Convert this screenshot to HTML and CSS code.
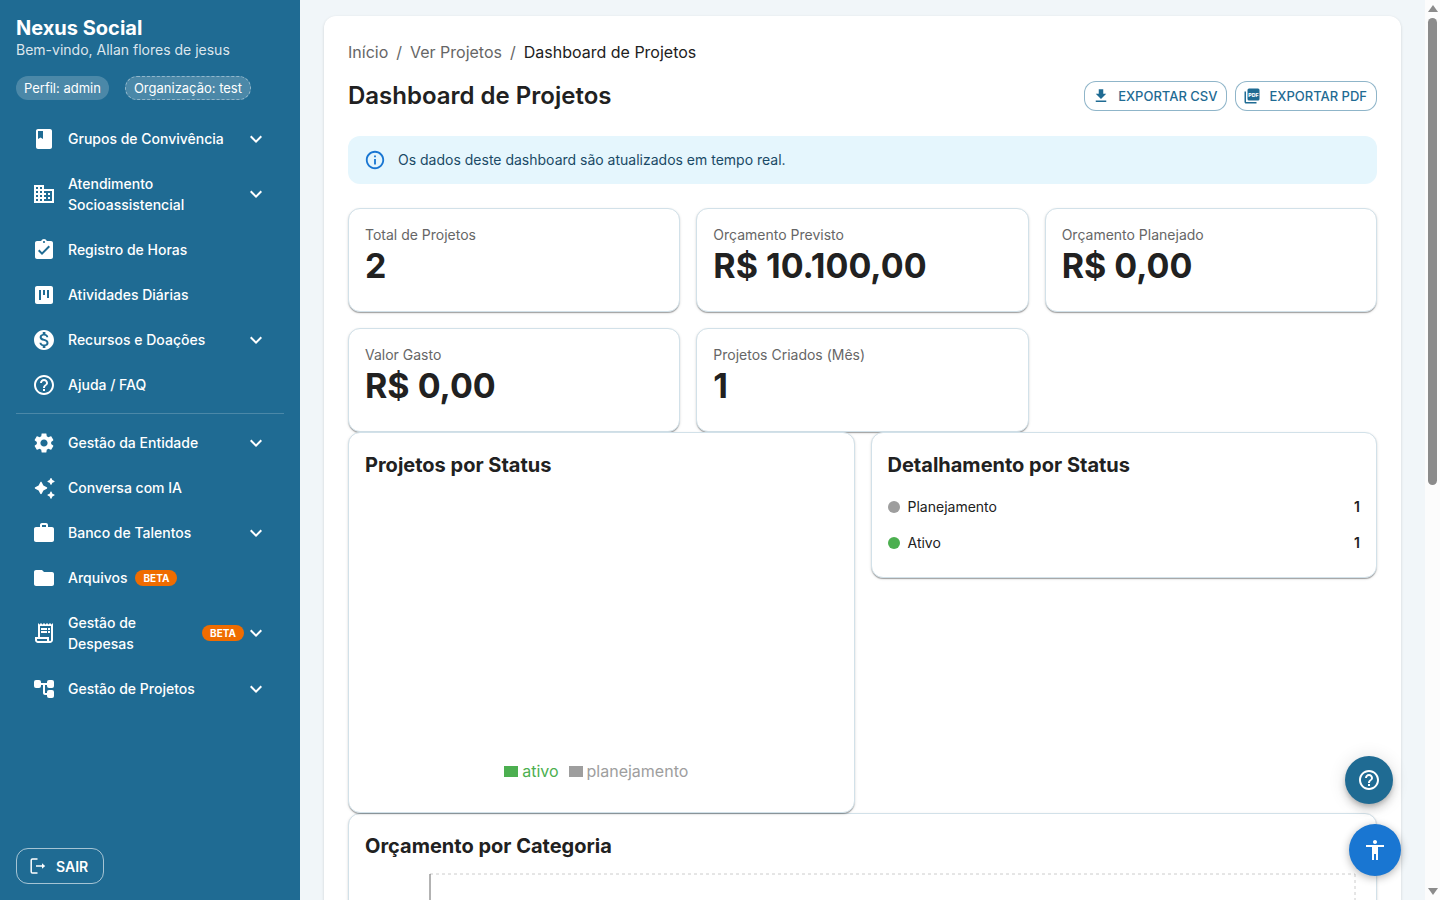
FILE: index.html
```html
<!DOCTYPE html>
<html lang="pt-BR">
  <head>
    <meta charset="UTF-8" />
    <meta name="viewport" content="width=device-width, initial-scale=1.0" />
    <title>Nexus Social - Dashboard de Projetos</title>
    <link rel="stylesheet" href="styles.css">
  </head>
  <body>
    <svg class="sprite" aria-hidden="true">
      <symbol id="i-chevron" viewBox="0 0 24 24"><path d="M16.59 8.59 12 13.17 7.41 8.59 6 10l6 6 6-6z"/></symbol>
      <symbol id="i-help" viewBox="0 0 24 24"><path d="M11 18h2v-2h-2v2zm1-16C6.48 2 2 6.48 2 12s4.48 10 10 10 10-4.48 10-10S17.52 2 12 2zm0 18c-4.41 0-8-3.59-8-8s3.59-8 8-8 8 3.59 8 8-3.59 8-8 8zm0-14c-2.21 0-4 1.79-4 4h2c0-1.1.9-2 2-2s2 .9 2 2c0 2-3 1.75-3 5h2c0-2.25 3-2.5 3-5 0-2.21-1.79-4-4-4z"/></symbol>
    </svg>

    <div class="app">
      <aside class="sidebar">
        <div class="brand">Nexus Social</div>
        <div class="welcome">Bem-vindo, Allan flores de jesus</div>
        <div class="chips">
          <span class="chip">Perfil: admin</span>
          <span class="chip chip-dashed">Organização: test</span>
        </div>

        <nav class="menu">
          <button type="button" class="menu-item">
            <svg class="icon" viewBox="0 0 24 24"><path d="M18 2H6c-1.1 0-2 .9-2 2v16c0 1.1.9 2 2 2h12c1.1 0 2-.9 2-2V4c0-1.1-.9-2-2-2zM6 4h5v8l-2.500-1.500L6 12V4z"/></svg>
            <span class="menu-label"><span>Grupos de Convivência</span></span>
            <svg class="icon"><use href="#i-chevron"/></svg>
          </button>
          <button type="button" class="menu-item">
            <svg class="icon" viewBox="0 0 24 24"><path d="M12 7V3H2v18h20V7H12zM6 19H4v-2h2v2zm0-4H4v-2h2v2zm0-4H4V9h2v2zm0-4H4V5h2v2zm4 12H8v-2h2v2zm0-4H8v-2h2v2zm0-4H8V9h2v2zm0-4H8V5h2v2zm10 12h-8v-2h2v-2h-2v-2h2v-2h-2V9h8v10zm-2-8h-2v2h2v-2zm0 4h-2v2h2v-2z"/></svg>
            <span class="menu-label"><span>Atendimento Socioassistencial</span></span>
            <svg class="icon"><use href="#i-chevron"/></svg>
          </button>
          <a href="#" class="menu-item">
            <svg class="icon" viewBox="0 0 24 24"><path d="M19 3h-4.180C14.400 1.840 13.300 1 12 1c-1.300 0-2.400.84-2.820 2H5c-1.100 0-2 .9-2 2v14c0 1.100.9 2 2 2h14c1.100 0 2-.9 2-2V5c0-1.100-.9-2-2-2zm-7 0c.55 0 1 .45 1 1s-.45 1-1 1-1-.45-1-1 .45-1 1-1zm-2 14l-4-4 1.410-1.410L10 14.170l6.590-6.590L18 9l-8 8z"/></svg>
            <span class="menu-label"><span>Registro de Horas</span></span>
          </a>
          <a href="#" class="menu-item">
            <svg class="icon" viewBox="0 0 24 24"><path d="M19 3H5c-1.100 0-2 .9-2 2v14c0 1.100.9 2 2 2h14c1.100 0 2-.9 2-2V5c0-1.100-.9-2-2-2zM9 17H7V7h2v10zm4-5h-2V7h2v5zm4 3h-2V7h2v8z"/></svg>
            <span class="menu-label"><span>Atividades Diárias</span></span>
          </a>
          <button type="button" class="menu-item">
            <svg class="icon" viewBox="0 0 24 24"><path d="M12 2C6.480 2 2 6.480 2 12s4.480 10 10 10 10-4.480 10-10S17.520 2 12 2zm1.410 16.090V20h-2.670v-1.930c-1.710-.36-3.160-1.460-3.270-3.400h1.960c.1 1.050.82 1.870 2.650 1.870 1.960 0 2.400-.98 2.400-1.590 0-.83-.44-1.610-2.670-2.140-2.480-.6-4.180-1.620-4.180-3.670 0-1.720 1.390-2.840 3.110-3.210V4h2.670v1.950c1.860.45 2.790 1.860 2.850 3.390H14.300c-.05-1.110-.64-1.870-2.220-1.870-1.500 0-2.400.68-2.400 1.640 0 .84.65 1.390 2.670 1.910s4.180 1.390 4.180 3.910c-.01 1.830-1.380 2.830-3.120 3.160z"/></svg>
            <span class="menu-label"><span>Recursos e Doações</span></span>
            <svg class="icon"><use href="#i-chevron"/></svg>
          </button>
          <a href="#" class="menu-item">
            <svg class="icon"><use href="#i-help"/></svg>
            <span class="menu-label"><span>Ajuda / FAQ</span></span>
          </a>

          <hr class="divider" />

          <button type="button" class="menu-item">
            <svg class="icon" viewBox="0 0 24 24"><path d="M19.140 12.940c.04-.3.06-.61.06-.94 0-.32-.02-.64-.07-.94l2.030-1.580c.18-.14.23-.41.12-.61l-1.920-3.320c-.12-.22-.37-.29-.59-.22l-2.390.96c-.5-.38-1.030-.7-1.620-.94l-.36-2.540c-.04-.24-.24-.41-.48-.41h-3.840c-.24 0-.43.17-.47.41l-.36 2.540c-.59.24-1.130.57-1.620.94l-2.390-.96c-.22-.08-.47 0-.59.22L2.740 8.870c-.12.21-.08.47.12.61l2.030 1.580c-.05.3-.09.63-.09.94s.02.64.07.94l-2.030 1.580c-.18.14-.23.41-.12.61l1.920 3.320c.12.22.37.29.59.22l2.390-.96c.5.38 1.030.7 1.620.94l.36 2.540c.05.24.24.41.48.41h3.840c.24 0 .44-.17.47-.41l.36-2.540c.59-.24 1.130-.56 1.620-.94l2.390.96c.22.08.47 0 .59-.22l1.920-3.320c.12-.22.07-.47-.12-.61l-2.010-1.580zM12 15.600c-1.980 0-3.600-1.620-3.600-3.600s1.620-3.600 3.600-3.600 3.600 1.620 3.600 3.600-1.620 3.600-3.600 3.600z"/></svg>
            <span class="menu-label"><span>Gestão da Entidade</span></span>
            <svg class="icon"><use href="#i-chevron"/></svg>
          </button>
          <a href="#" class="menu-item">
            <svg class="icon" viewBox="0 0 24 24"><path d="M8.300 6.200c.3-.6 1.100-.6 1.400 0l1.700 3.400 3.400 1.700c.6.3.6 1.100 0 1.400l-3.400 1.700-1.700 3.400c-.3.6-1.100.6-1.400 0l-1.700-3.400-3.400-1.700c-.6-.3-.6-1.100 0-1.400l3.400-1.700zM18.500 2.200c.2-.4.800-.4 1 0l.9 1.900 1.900.9c.4.2.4.800 0 1l-1.900.7-.9 1.900c-.2.4-.8.4-1 0l-.9-1.900-1.900-.7c-.4-.2-.4-.8 0-1l1.900-.9zM18.500 15.800c.2-.4.800-.4 1 0l.9 1.900 1.900.9c.4.2.4.800 0 1l-1.900.9-.9 1.900c-.2.4-.8.4-1 0l-.9-1.900-1.900-.9c-.4-.2-.4-.8 0-1l1.900-.9z"/></svg>
            <span class="menu-label"><span>Conversa com IA</span></span>
          </a>
          <button type="button" class="menu-item">
            <svg class="icon" viewBox="0 0 24 24"><path d="M20 6h-4V4c0-1.110-.89-2-2-2h-4c-1.110 0-2 .89-2 2v2H4c-1.110 0-1.990.89-1.990 2L2 19c0 1.110.89 2 2 2h16c1.110 0 2-.89 2-2V8c0-1.110-.89-2-2-2zm-6 0h-4V4h4v2z"/></svg>
            <span class="menu-label"><span>Banco de Talentos</span></span>
            <svg class="icon"><use href="#i-chevron"/></svg>
          </button>
          <a href="#" class="menu-item">
            <svg class="icon" viewBox="0 0 24 24"><path d="M10 4H4c-1.100 0-1.990.9-1.990 2L2 18c0 1.100.9 2 2 2h16c1.100 0 2-.9 2-2V8c0-1.100-.9-2-2-2h-8l-2-2z"/></svg>
            <span class="menu-label"><span>Arquivos</span><span class="beta">BETA</span></span>
          </a>
          <button type="button" class="menu-item">
            <svg class="icon" viewBox="0 0 24 24"><path d="M19.500 3.500 18 2l-1.500 1.500L15 2l-1.500 1.500L12 2l-1.500 1.500L9 2 7.500 3.500 6 2v14H3v3c0 1.660 1.340 3 3 3h12c1.660 0 3-1.340 3-3V2l-1.500 1.500zM15 20H6c-.55 0-1-.45-1-1v-1h10v2zm4-1c0 .55-.45 1-1 1s-1-.45-1-1v-3H8V5h11v14z"/><path d="M9 7h6v2H9zm7 0h2v2h-2zm-7 3h6v2H9zm7 0h2v2h-2z"/></svg>
            <span class="menu-label"><span>Gestão de Despesas</span><span class="beta">BETA</span></span>
            <svg class="icon"><use href="#i-chevron"/></svg>
          </button>
          <button type="button" class="menu-item">
            <svg class="icon" viewBox="0 0 24 24"><rect x="2" y="3" width="7" height="8" rx="2"/><rect x="15" y="3" width="7" height="8" rx="2"/><rect x="15" y="13" width="7" height="8" rx="2"/><path d="M8 6h8v2h-3v8h3v2h-3c-1.100 0-2-.9-2-2V8H8z"/></svg>
            <span class="menu-label"><span>Gestão de Projetos</span></span>
            <svg class="icon"><use href="#i-chevron"/></svg>
          </button>
        </nav>

        <button type="button" class="logout">
          <svg viewBox="0 0 18 18"><path d="M8.500 2H3.500c-.8 0-1.300.5-1.300 1.300v11.400c0 .8.500 1.300 1.300 1.300h5M7 9h7" fill="none" stroke="currentColor" stroke-width="1.500"/><path d="M13 6.200 16.200 9 13 11.800z"/></svg>
          SAIR
        </button>
      </aside>

      <main class="main">
        <div class="panel">
          <nav class="breadcrumb">
            <a href="#">Início</a>
            <span>/</span>
            <a href="#">Ver Projetos</a>
            <span>/</span>
            <span class="current">Dashboard de Projetos</span>
          </nav>

          <div class="page-header">
            <h1>Dashboard de Projetos</h1>
            <div class="actions">
              <button type="button" class="btn-export">
                <svg viewBox="0 0 24 24"><path d="M5 20h14v-2H5v2zM19 9h-4V3H9v6H5l7 7 7-7z"/></svg>
                EXPORTAR CSV
              </button>
              <button type="button" class="btn-export">
                <svg viewBox="0 0 24 24"><path d="M4 6H2v14c0 1.100.9 2 2 2h14v-2H4V6z"/><rect x="6" y="2" width="16" height="16" rx="2"/><text class="pdf-text" x="14" y="13" text-anchor="middle">PDF</text></svg>
                EXPORTAR PDF
              </button>
            </div>
          </div>

          <div class="alert">
            <svg viewBox="0 0 24 24"><path d="M11 7h2v2h-2zm0 4h2v6h-2zm1-9C6.480 2 2 6.480 2 12s4.480 10 10 10 10-4.480 10-10S17.520 2 12 2zm0 18c-4.410 0-8-3.590-8-8s3.590-8 8-8 8 3.590 8 8-3.590 8-8 8z"/></svg>
            <span>Os dados deste dashboard são atualizados em tempo real.</span>
          </div>

          <section class="stats">
            <div class="card">
              <div class="stat-label">Total de Projetos</div>
              <div class="stat-value">2</div>
            </div>
            <div class="card">
              <div class="stat-label">Orçamento Previsto</div>
              <div class="stat-value">R$ 10.100,00</div>
            </div>
            <div class="card">
              <div class="stat-label">Orçamento Planejado</div>
              <div class="stat-value">R$ 0,00</div>
            </div>
            <div class="card">
              <div class="stat-label">Valor Gasto</div>
              <div class="stat-value">R$ 0,00</div>
            </div>
            <div class="card">
              <div class="stat-label">Projetos Criados (Mês)</div>
              <div class="stat-value">1</div>
            </div>
          </section>

          <section class="status-row">
            <div class="card">
              <h2>Projetos por Status</h2>
              <div class="pie-chart">
                <ul class="legend">
                  <li class="ativo">ativo</li>
                  <li class="planejamento">planejamento</li>
                </ul>
              </div>
            </div>
            <div class="card">
              <h2>Detalhamento por Status</h2>
              <ul class="status-list">
                <li><span class="dot planejamento"></span>Planejamento<strong>1</strong></li>
                <li><span class="dot ativo"></span>Ativo<strong>1</strong></li>
              </ul>
            </div>
          </section>

          <section class="card">
            <h2>Orçamento por Categoria</h2>
            <div class="bar-chart">
              <svg class="plot">
                <line class="grid-line" x1="0" y1="0" x2="100%" y2="0"/>
                <line class="grid-line" x1="100%" y1="0" x2="100%" y2="100%"/>
                <line class="axis" x1="0" y1="0" x2="0" y2="100%"/>
              </svg>
            </div>
          </section>
        </div>
      </main>

      <div class="scrollbar" aria-hidden="true">
        <span class="arrow arrow-up"></span>
        <div class="track"><div class="thumb"></div></div>
        <span class="arrow arrow-down"></span>
      </div>
    </div>

    <button type="button" class="fab fab-help" aria-label="Ajuda">
      <svg class="icon"><use href="#i-help"/></svg>
    </button>
    <button type="button" class="fab fab-access" aria-label="Acessibilidade">
      <svg class="icon" viewBox="0 0 24 24"><path d="M12 2c1.100 0 2 .9 2 2s-.9 2-2 2-2-.9-2-2 .9-2 2-2zm9 7h-6v13h-2v-6h-2v6H9V9H3V7h18v2z"/></svg>
    </button>
  </body>
</html>
```
FILE: styles.css
```css
* {
  box-sizing: border-box;
}
body {
  margin: 0;
  font-family: Inter, "Liberation Sans", sans-serif;
  font-size: 14px;
  line-height: 20px;
  color: #212121;
  background: #f1f6f9;
}
button {
  font-family: inherit;
  cursor: pointer;
}
svg {
  fill: currentColor;
  flex-shrink: 0;
}
ul {
  list-style: none;
  margin: 0;
  padding: 0;
}
.sprite {
  display: none;
}
.icon {
  width: 24px;
  height: 24px;
}
.app {
  display: flex;
  height: 100vh;
  overflow: hidden;
}

/* Sidebar */
.sidebar {
  display: flex;
  flex-direction: column;
  width: 300px;
  flex-shrink: 0;
  padding: 16px;
  background: #1f6b93;
  color: #fff;
}
.brand {
  font-size: 20px;
  font-weight: 700;
  line-height: 24px;
}
.welcome {
  color: rgba(255, 255, 255, 0.85);
}
.chips {
  display: flex;
  gap: 16px;
  margin: 16px 0;
}
.chip {
  padding: 0 8px;
  border-radius: 12px;
  font-size: 13px;
  line-height: 24px;
  background: rgba(255, 255, 255, 0.2);
}
.chip-dashed {
  border: 1px dashed rgba(255, 255, 255, 0.4);
  line-height: 22px;
}
.menu {
  flex: 1;
}
.menu-item {
  display: flex;
  align-items: center;
  width: 100%;
  padding: 12px 16px;
  border: none;
  background: none;
  color: #fff;
  font-size: 14px;
  font-weight: 500;
  line-height: 21px;
  text-align: left;
  text-decoration: none;
}
.menu-item .icon {
  margin: -2px 0;
}
.menu-label {
  display: flex;
  align-items: center;
  flex: 1;
  margin-left: 12px;
}
.beta {
  margin-left: 8px;
  padding: 0 8px;
  border-radius: 8px;
  background: #ef6c00;
  color: #fff;
  font-size: 10px;
  font-weight: 700;
  line-height: 16px;
}
.divider {
  margin: 6px 0;
  border: none;
  border-top: 1px solid rgba(255, 255, 255, 0.2);
}
.logout {
  display: flex;
  align-items: center;
  align-self: flex-start;
  gap: 9px;
  height: 36px;
  padding: 0 15px 0 12px;
  border: 1px solid rgba(255, 255, 255, 0.6);
  border-radius: 12px;
  background: none;
  color: #fff;
  font-size: 14px;
  font-weight: 600;
}
.logout svg {
  width: 18px;
  height: 18px;
}

/* Content */
.main {
  flex: 1;
  min-width: 0;
  padding: 16px 24px;
}
.panel {
  padding: 24px;
  border-radius: 12px;
  background: #fff;
  box-shadow: 0 1px 3px rgba(0, 0, 0, 0.15);
}
.breadcrumb {
  display: flex;
  gap: 8px;
  font-size: 16px;
  line-height: 24px;
  color: #666;
}
.breadcrumb a {
  color: #666;
  text-decoration: none;
}
.breadcrumb .current {
  color: #212121;
}
.page-header {
  display: flex;
  align-items: center;
  justify-content: space-between;
  margin: 16px 0 24px;
}
h1 {
  margin: 0;
  font-size: 24px;
  font-weight: 600;
  line-height: 32px;
}
.actions {
  display: flex;
  gap: 8px;
}
.btn-export {
  display: flex;
  align-items: center;
  gap: 8px;
  height: 30px;
  padding: 0 9px 0 7px;
  border: 1px solid rgba(31, 107, 147, 0.5);
  border-radius: 12px;
  background: #fff;
  color: #1f6b93;
  font-size: 13px;
  font-weight: 500;
}
.btn-export svg {
  width: 18px;
  height: 18px;
}
.pdf-text {
  fill: #fff;
  font-size: 7px;
  font-weight: 800;
}
.alert {
  display: flex;
  align-items: center;
  gap: 12px;
  margin-bottom: 24px;
  padding: 13px 16px;
  border-radius: 12px;
  background: #e5f6fd;
  color: #1a4a66;
}
.alert svg {
  width: 22px;
  height: 22px;
  fill: #1976d2;
}
.card {
  padding: 16px 16px 24px;
  border: 1px solid #d2e1e9;
  border-radius: 12px;
  background: #fff;
  box-shadow: 0 2px 1px -1px rgba(0, 0, 0, 0.2), 0 1px 1px rgba(0, 0, 0, 0.14),
    0 1px 3px rgba(0, 0, 0, 0.12);
}
.stats {
  display: grid;
  grid-template-columns: repeat(3, 1fr);
  gap: 16px;
}
.stat-label {
  color: #666;
}
.stat-value {
  font-size: 34px;
  font-weight: 700;
  line-height: 42px;
}
.status-row {
  display: grid;
  grid-template-columns: 1fr 1fr;
  align-items: start;
  gap: 16px;
}
h2 {
  margin: 0 0 8px;
  font-size: 20px;
  font-weight: 700;
  line-height: 32px;
}
.pie-chart {
  display: flex;
  flex-direction: column;
  justify-content: flex-end;
  height: 299px;
}
.legend {
  display: flex;
  justify-content: center;
  padding-bottom: 5px;
  font-size: 16px;
  line-height: 24px;
}
.legend li {
  display: flex;
  align-items: center;
  gap: 4px;
  margin-right: 10px;
}
.legend li::before {
  content: "";
  width: 14px;
  height: 11px;
  background: currentColor;
}
.ativo {
  color: #4caf50;
}
.planejamento {
  color: #9e9e9e;
}
.status-list li {
  display: flex;
  align-items: center;
  padding-top: 8px;
  margin-bottom: 8px;
}
.status-list li:last-child {
  margin-bottom: 0;
}
.status-list strong {
  margin-left: auto;
  font-weight: 600;
}
.dot {
  width: 12px;
  height: 12px;
  margin-right: 8px;
  border-radius: 50%;
  background: currentColor;
}
.bar-chart {
  height: 300px;
  padding: 4px 5px 30px 65px;
}
.plot {
  display: block;
  width: 100%;
  height: 100%;
  overflow: visible;
}
.grid-line {
  stroke: #ccc;
  stroke-dasharray: 3 3;
}
.axis {
  stroke: #666;
}

/* Page scrollbar */
.scrollbar {
  display: flex;
  flex-direction: column;
  align-items: center;
  width: 15px;
  padding: 5px 0;
  background: #fcfcfc;
}
.track {
  flex: 1;
  width: 9px;
  margin: 6px 0;
}
.thumb {
  height: 54%;
  border-radius: 5px;
  background: #8b8b8b;
}
.arrow {
  border: 5px solid transparent;
}
.arrow-up {
  border-top: none;
  border-bottom: 7px solid #8b8b8b;
}
.arrow-down {
  border-bottom: none;
  border-top: 7px solid #8b8b8b;
}

/* Floating buttons */
.fab {
  position: fixed;
  display: flex;
  align-items: center;
  justify-content: center;
  padding: 0;
  border: none;
  border-radius: 50%;
  color: #fff;
  box-shadow: 0 3px 5px -1px rgba(0, 0, 0, 0.2), 0 6px 10px rgba(0, 0, 0, 0.14),
    0 1px 18px rgba(0, 0, 0, 0.12);
}
.fab-help {
  right: 47px;
  bottom: 96px;
  width: 48px;
  height: 48px;
  background: #1f6b93;
}
.fab-access {
  right: 39px;
  bottom: 24px;
  width: 52px;
  height: 52px;
  background: #1976d2;
  box-shadow: 0 2px 8px rgba(0, 0, 0, 0.3);
}
```
